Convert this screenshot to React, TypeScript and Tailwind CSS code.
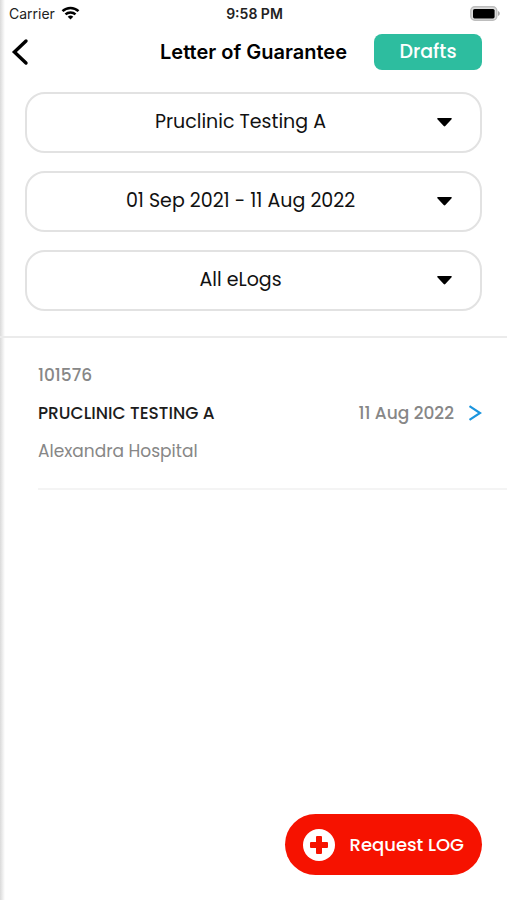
interface Filter {
  id: string;
  label: string;
  value: string;
}

interface LogEntry {
  id: string;
  patient: string;
  hospital: string;
  date: string;
}

const filters: Filter[] = [
  { id: "clinic", label: "Clinic", value: "Pruclinic Testing A" },
  { id: "period", label: "Period", value: "01 Sep 2021 - 11 Aug 2022" },
  { id: "type", label: "eLog type", value: "All eLogs" },
];

const entries: LogEntry[] = [
  {
    id: "101576",
    patient: "PRUCLINIC TESTING A",
    hospital: "Alexandra Hospital",
    date: "11 Aug 2022",
  },
];

function StatusBar() {
  return (
    <div className="grid h-7 grid-cols-3 items-center pr-[7px] pb-0.5 pl-[9px] font-['Inter',sans-serif] text-[14px] text-[#222]">
      <div className="flex items-center gap-1.5">
        <span>Carrier</span>
        <svg width="19" height="14" viewBox="0 0 18 14" fill="none" stroke="#000" strokeWidth="2.5">
          <path d="M1 5.2a11.5 11.5 0 0 1 16 0" />
          <path d="M4 8.4a7.2 7.2 0 0 1 10 0" />
          <path d="M9 13.6 6.2 10.8a4 4 0 0 1 5.6 0Z" fill="#000" stroke="none" />
        </svg>
      </div>
      <span className="text-center font-semibold">9:58 PM</span>
      <svg className="justify-self-end" width="30" height="15" viewBox="0 0 30 15">
        <rect x="0.8" y="0.8" width="26" height="13.4" rx="4" fill="#dcdcdc" stroke="#bdbdbd" strokeWidth="1.4" />
        <rect x="3" y="3" width="21.6" height="9.4" rx="1.6" fill="#000" />
        <path d="M28 5v5c1.100-.4 1.800-1.400 1.800-2.500S29.100 5.400 28 5Z" fill="#aaa" />
      </svg>
    </div>
  );
}

function Header() {
  return (
    <header className="grid h-12 grid-cols-[1fr_auto_1fr] items-center pr-[25px] pl-2">
      <button type="button" aria-label="Back" className="w-6">
        <svg width="24" height="28" viewBox="0 0 24 28" fill="none" stroke="#000" strokeWidth="3.4">
          <path d="M18 3 6.400 14 18 25" strokeLinecap="round" strokeLinejoin="miter" />
        </svg>
      </button>
      <h1 className="pl-[17px] font-['Inter',sans-serif] text-[20px] font-semibold text-black">
        Letter of Guarantee
      </h1>
      <button
        type="button"
        className="h-9 w-[108px] justify-self-end rounded-lg bg-[#2dbd9f] text-[19px] font-medium text-white"
      >
        Drafts
      </button>
    </header>
  );
}

function FilterSelect({ id, label, value }: Filter) {
  return (
    <div className="relative">
      <select
        id={id}
        aria-label={label}
        className="h-[61px] w-full appearance-none rounded-[20px] border-2 border-[#e2e2e2] bg-white pr-[42px] pl-4 text-center text-[19px] text-[#111]"
      >
        <option>{value}</option>
      </select>
      <svg
        className="pointer-events-none absolute top-[26px] right-[30px]"
        width="15"
        height="9"
        viewBox="0 0 15 9"
      >
        <path d="M.8 0h13.400c.6 0 .8.800.4 1.200L8.300 8.100c-.4.4-1.200.4-1.600 0L.4 1.200C0 .8.200 0 .8 0Z" />
      </svg>
    </div>
  );
}

function LogRow({ id, patient, hospital, date }: LogEntry) {
  return (
    <li className="ml-[38px] border-b-2 border-[#f4f4f4]">
      <a href={`#${id}`} className="block py-[18px] pr-[25px] text-[17px] leading-[38px] text-[#878787]">
        <p className="font-medium">{id}</p>
        <div className="flex items-center justify-between">
          <p className="font-medium text-[#1c1c1c]">{patient}</p>
          <div className="flex items-center gap-3.5">
            <span className="font-medium">{date}</span>
            <svg width="14" height="16" viewBox="0 0 14 16" fill="none" stroke="#1b95de" strokeWidth="2.2">
              <path d="M1.500 1.200 12 8 1.500 14.800" />
            </svg>
          </div>
        </div>
        <p>{hospital}</p>
      </a>
    </li>
  );
}

export default function App() {
  return (
    <div className="flex min-h-screen flex-col bg-[linear-gradient(to_right,#dadada,#fff_5px)] font-['Poppins','Inter',sans-serif]">
      <StatusBar />
      <Header />
      <main>
        <form className="flex flex-col gap-[18px] border-b-2 border-[#ebebeb] px-[25px] pt-4 pb-[25px]">
          {filters.map((filter) => (
            <FilterSelect key={filter.id} {...filter} />
          ))}
        </form>
        <ul>
          {entries.map((entry) => (
            <LogRow key={entry.id} {...entry} />
          ))}
        </ul>
      </main>
      <footer className="mt-auto flex justify-end p-[25px]">
        <button
          type="button"
          className="flex h-[61px] w-[197px] items-center justify-between rounded-full bg-[#f61200] px-[18px] text-[18px] font-medium text-white"
        >
          <svg width="32" height="32" viewBox="0 0 32 32">
            <circle cx="16" cy="16" r="16" fill="#fff" />
            <path
              d="M14 7h4a1 1 0 0 1 1 1v5h5a1 1 0 0 1 1 1v4a1 1 0 0 1-1 1h-5v5a1 1 0 0 1-1 1h-4a1 1 0 0 1-1-1v-5H8a1 1 0 0 1-1-1v-4a1 1 0 0 1 1-1h5V8a1 1 0 0 1 1-1Z"
              fill="#f61200"
            />
          </svg>
          Request LOG
        </button>
      </footer>
    </div>
  );
}
